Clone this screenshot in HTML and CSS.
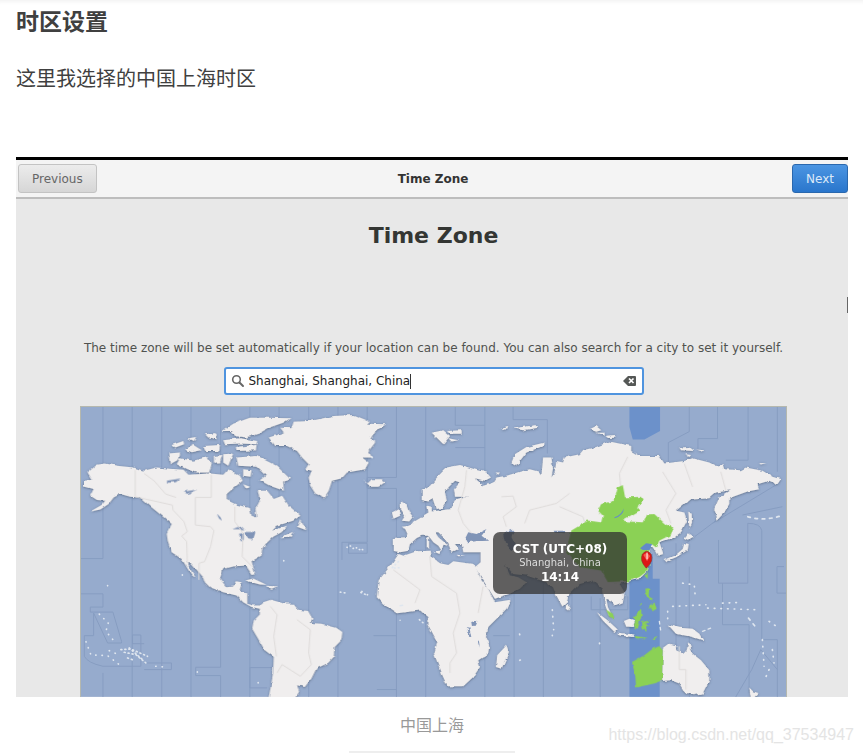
FILE: index.html
```html
<!DOCTYPE html>
<html lang="zh-CN">
<head>
<meta charset="utf-8">
<title>时区设置</title>
<link rel="stylesheet" href="styles.css">
</head>
<body>
<main class="article">
  <h2 class="heading">时区设置</h2>
  <p class="lead">这里我选择的中国上海时区</p>
  <figure class="figure">
    <div class="installer">
      <header class="bar">
        <button class="btn" type="button">Previous</button>
        <strong class="bar-title">Time Zone</strong>
        <button class="btn btn-primary" type="button">Next</button>
      </header>
      <section class="zone">
        <h1 class="zone-title">Time Zone</h1>
        <i class="edge"></i>
        <div class="picker">
          <label class="hint" for="city">The time zone will be set automatically if your location can be found. You can also search for a city to set it yourself.</label>
          <div class="search">
            <svg class="icon" viewBox="0 0 14 14" aria-hidden="true"><circle cx="5.5" cy="5.5" r="3.8" fill="none" stroke="#666" stroke-width="1.6"/><path d="M8.5 8.5 12 12" stroke="#666" stroke-width="2" stroke-linecap="round"/></svg>
            <input class="city" id="city" type="text" value="Shanghai, Shanghai, China"><i class="caret"></i>
            <button class="clear" type="button" aria-label="Clear"><svg class="icon" viewBox="0 0 14 14"><path d="M5 2H12Q13 2 13 3V11Q13 12 12 12H5L0 7Z" fill="#555856"/><path d="M6 4.500 10.500 9M10.500 4.500 6 9" stroke="#fff" stroke-width="1.700"/></svg></button>
          </div>
          <div class="map">
            <svg class="world" viewBox="0 0 2121 872" role="img" aria-label="World time zones">
              <defs>
                <filter id="coast" x="0" y="0" width="2121" height="872" filterUnits="userSpaceOnUse">
                  <feTurbulence type="fractalNoise" baseFrequency=".055" numOctaves="2" seed="4" result="n"/>
                  <feDisplacementMap in="SourceGraphic" in2="n" scale="10" xChannelSelector="R" yChannelSelector="G" result="d"/>
                  <feDropShadow in="d" dx="0" dy="2" stdDeviation="3" flood-color="#4c5870" flood-opacity=".75"/>
                </filter>
                <filter id="rough" x="0" y="0" width="2121" height="872" filterUnits="userSpaceOnUse">
                  <feTurbulence type="fractalNoise" baseFrequency=".055" numOctaves="2" seed="4" result="n"/>
                  <feDisplacementMap in="SourceGraphic" in2="n" scale="10" xChannelSelector="R" yChannelSelector="G"/>
                </filter>
              </defs>
              <rect width="2121" height="872" fill="#96abcd"/>
              <g fill="none" stroke="#879dc1" stroke-width="3">
                <path d="M66 0V456H0M66 800V872M154 0V872M243 0V872M331 0V872M420 0V783H345V808H420V872M508 0V872M596 0V872M685 0V872M773 0V872M861 0V407H785V460M949 0V212H861V245H949V872M1037 0V872M1126 0V55H1215M1126 122H1215M1215 0V122V872M1300 0V38H1403V140M1303 530V872M1391 440V872M1477 560V872M1562 575V872M1830 0V74L1767 107V180M1915 0V95H1856V130M2007 0V160H1940M2095 0V195"/>
                <path d="M0 562H66V602H28V617H96L122 705V710H80L38 620V688H10V750Q20 770 66 780H180V686H155V712H190M190 770H272V790H190M508 845V784H575M508 845H560M805 410H861V440H805ZM1790 410V720M1830 480V872M1918 400V530H2006V350M1930 530V655H2010V860M2006 350Q2045 350 2048 372V700H2095V872M2115 480H2094V560H2121M1645 570V610H1535V570M1820 410 1910 342M1900 350 2090 235M1990 325 2110 300M948 688H880M1290 688H1240M890 850H948M1970 872 2018 790 2045 730 2095 790"/>
              </g>
              <path d="M1650 0H1742V72L1695 98H1660L1650 60ZM1650 520 1720 440V517H1741V872H1650Z" fill="#6c91ca"/>

              <g filter="url(#coast)" fill="#f0eeee">
                <g transform="translate(-12 -18)">
                  <path d="M22 240 45 237 32 215 60 192 85 188 120 195 170 200 200 210 240 200 270 203 320 207 335 222 400 218 440 222 455 205 470 215 490 225 498 240 470 262 450 280 450 298 480 312 520 322 525 345 540 350 537 325 550 300 544 270 572 270 592 295 617 285 637 315 672 345 650 360 602 375 587 390 632 375 615 395 590 408 567 430 556 450 555 465 525 482 535 518 525 520 508 495 470 498 440 505 430 535 450 560 470 558 478 542 495 545 488 575 512 578 512 610 530 615 548 615 560 605 583 598 620 608 650 610 665 628 695 632 708 655 700 668 735 670 780 682 798 695 795 720 775 740 772 770 755 788 720 805 705 835 685 860 662 855 668 875 650 900H575L583 860 590 820 592 770 565 750 545 715 527 685 532 660 550 642 550 625 525 620 500 605 480 585 440 575 400 560 385 545 380 530 340 485 330 485 340 505 358 533 345 523 315 475 285 455 273 420 270 400 285 370 262 350 225 320 190 290 160 288 130 280 110 290 95 310 70 326 40 332 75 312 85 300 60 298 40 285 50 265 22 257Z"/>
                  <path d="M275 158 310 155 307 175 280 190ZM310 172 350 180 392 168 405 190 397 215 360 215 330 205 300 190ZM285 132 320 120 322 130 296 140ZM335 112 358 108 352 120ZM325 145 350 132 375 148 345 154ZM385 100 420 96 420 115 395 110ZM380 135 430 132 428 150 388 150ZM412 165 437 162 430 185 412 185ZM440 160 470 158 455 195 440 185ZM438 90 470 68 520 50 570 50 642 52 620 65 577 80 547 98 510 110 480 106 465 90ZM440 118 490 112 542 120 540 130 490 128 445 130ZM478 138 540 132 538 148 480 150ZM480 170 540 165 600 195 642 235 620 242 622 270 580 255 550 238 568 225 540 198 485 195ZM500 205 525 208 522 228 500 225ZM500 250 520 258 510 266Z"/>
                  <path d="M577 110 622 95 612 80 645 82 652 62 702 60 772 45 832 42 877 60 870 68 930 70 897 90 882 115 897 125 877 150 887 170 857 170 877 185 867 205 812 215 797 232 767 240 757 270 744 290 717 278 702 255 697 230 707 210 687 205 697 190 677 170 662 150 632 135 597 135ZM862 235 875 247 887 235 917 235 925 245 907 258 882 258ZM662 378 672 355 677 372 692 380 688 388ZM612 410 650 393 640 408ZM506 540 530 534 570 553 550 552ZM570 556 602 558 585 565Z"/>
                </g>
                <g transform="translate(900 -18)">
                  <path d="M38 412 75 410 82 400 75 385 65 378 90 375 100 362 120 350 145 335 142 315 155 318 155 332 215 325 220 300 265 288 225 288 222 265 240 245 225 240 205 260 195 275 200 300 185 322 170 325 160 295 145 302 125 298 125 270 150 255 175 225 200 200 240 192 285 205 320 215 333 230 315 240 285 232 310 255 340 245 350 230 380 225 420 213 450 205 475 212 485 225 490 170 515 170 520 205 515 230 525 215 530 180 550 185 555 170 600 160 610 148 650 138 690 122 755 135 755 150 780 165 840 165 855 188 915 180 940 172 990 185 1010 195 1030 190 1035 205 1085 208 1100 200 1150 210 1180 228 1205 235 1195 250 1170 240 1135 250 1140 265 1105 272 1070 285 1050 292 1050 310 1035 335 1015 357 1005 325 1020 290 1055 268 1010 275 990 292 930 297 890 330 915 335 923 360 905 395 885 410 840 425 852 460 835 465 820 440 805 435 790 445 812 450 805 465 812 480 805 510 780 535 750 542 720 550 735 575 730 605 705 615 695 600 680 595 685 620 700 650 688 645 675 610 670 565 640 540 600 550 565 585 562 605 548 618 530 585 520 560 500 545 440 525 400 520 375 490 390 525 415 530 440 545 420 565 390 580 345 595 310 540 285 500 302 485 302 455 250 455 245 430 225 430 235 445 215 455 205 430 190 410 175 395 165 395 175 410 205 435 190 432 185 450 175 435 160 425 145 405 125 405 110 412 90 430 85 450 60 455 38 450Z"/>
                  <path d="M62 302 78 310 85 330 100 350 90 362 65 360 75 345 62 325ZM35 335 55 325 60 345 40 354ZM155 95 190 88 210 105 190 130 175 115ZM200 90 245 88 245 98 215 98ZM205 112 235 118 215 122ZM395 185 405 160 440 138 495 125 490 135 440 155 420 180 415 195ZM360 83 385 78 382 86ZM400 82 470 72 475 80 430 88ZM630 85 650 75 665 88 650 92ZM650 95 675 95 675 104ZM678 105 705 102 708 110 685 111ZM900 140 930 138 945 150 905 148ZM950 146 975 148 970 152ZM918 160 935 162 930 168ZM1140 187 1162 186 1145 191ZM347 215 360 215 355 222ZM927 333 937 335 938 365 930 385ZM928 398 945 408 925 420 915 415ZM915 428 925 430 922 450 890 470 870 478 860 475 890 462 910 445ZM856 478 866 475 862 485ZM560 612 572 620 565 630 558 625ZM140 415 147 405 147 440 140 440ZM160 452 183 450 178 460ZM230 462 255 465 235 467Z"/>
                  <path d="M55 460 70 465 110 452 152 450 155 470 180 488 205 493 220 482 280 490 285 495 305 540 325 565 345 605 392 598 380 625 350 655 325 680 318 710 328 735 325 760 295 780 300 800 280 830 250 858 202 858 185 820 162 760 172 725 145 675 145 650 120 630 50 638 15 615-10 590-5 540 35 490ZM380 735 387 755 365 805 348 800 352 765Z"/>
                </g>
                <g transform="translate(1200 342)">
                  <path d="M550 385 570 370 595 375 590 390 612 400 622 390 628 365 640 400 665 420 690 450 690 480 670 520 640 525 615 515 600 490 575 480 548 482ZM565 312 600 322 640 325 660 340 672 360 640 350 590 340ZM352 275 385 300 412 325 405 335 370 300ZM415 337 465 342 460 350 420 345ZM433 302 450 295 468 300 460 320 440 318ZM810 502 822 514 838 518 825 532H815Z"/>
                </g>
              </g>

              <g filter="url(#rough)" fill="#8094b7">
                <g transform="translate(900 -18)">
                  <path d="M255 415 265 395 290 400 320 385 305 405 325 420 290 422 260 425ZM370 400 395 385 405 395 395 410 410 440 395 450 375 425ZM525 390 560 390 555 398 528 396Z"/>
                  <path d="M274 665 292 660 290 675 276 677ZM262 680 268 710 274 710 268 680ZM293 720 300 742 297 722Z"/>
                </g>
                <path d="M258 222 300 215 285 226 260 228ZM308 255 350 248 320 262ZM408 320 420 332 424 342 415 335ZM455 368 480 358 492 368ZM475 382 480 400 490 400 490 378ZM492 376 525 376 518 398 500 395Z"/>
              </g>

              <g fill="none" stroke="#dedbda" stroke-width="3">
                <path d="M163 190V270L275 295 277 310 310 345 320 375 303 388 318 405 320 470M190 200 220 222 255 262 286 272M392 205V272H344V355L390 360 400 372 390 420 372 465 355 470V520M463 300V345L488 380 485 450 515 480M570 600 590 625 580 690 588 750M650 640 690 670 685 740 693 775 660 810 605 775 590 800"/>
                <path d="M1160 190 1155 240 1135 310 1150 350 1175 380M1265 270 1300 268 1310 300 1270 330 1280 360M1470 260 1430 290 1350 310 1335 350M1645 150 1620 200 1625 255M1750 195 1790 260 1760 310 1775 350M1815 170 1840 240M1925 195 1940 250M940 490 1020 550 1005 590M1050 450 1055 510 1130 560 1140 620 1120 680 1130 740 1110 770V800M1210 540 1195 620M1440 300 1510 330 1520 360M1800 720V790H1820V850"/>
              </g>

              <g filter="url(#rough)" fill="#8bd154">
                <path transform="translate(1440 -18)" d="M175 260 190 253 197 290 245 288 250 298 232 320 240 330 190 358 200 362 250 365 260 342 285 340 320 372 342 380 330 405 300 420 290 440 275 430 250 440 270 450 265 465 272 480 265 510 240 530 210 542 145 545 125 510 60 500 20 450 30 410 35 390 85 360 125 365 130 345 115 330 125 310 165 300Z"/>
                <path transform="translate(1200 342)" d="M458 425 495 405 520 385 540 378 550 390 548 482 525 490 470 502 468 470ZM380 268 400 280 405 295 390 290ZM460 292 485 265 487 285 475 325 462 322 468 300ZM498 205 510 203 508 225 520 232 518 240 500 225ZM508 260 525 245 532 265 520 272ZM490 248 480 258 485 248ZM488 305 510 300 498 310 512 320 500 320 502 335 490 325ZM495 165 505 155 505 175ZM465 347 505 352 470 354ZM515 355 535 347 525 358Z"/>
              </g>
              <path d="M1605 332Q1625 325 1633 305 1633 325 1605 335ZM1682 425 1700 410 1718 412 1710 430H1690Z" fill="#638bc9"/>

              <g fill="none" stroke="#dfe6ef" stroke-linecap="round" stroke-width="5">
                <path stroke-dasharray="1 18" d="M55 623 82 650 75 675 96 700M15 706 30 746 80 748 115 775M85 733 115 746M225 780 262 783M80 538V536M610 463V462M810 418 850 430M875 152 885 154M305 506V504M800 422 845 430M845 555 862 565M350 798V797M533 830V828"/>
                <path stroke-dasharray="3 9" d="M120 730 150 728 200 750M130 738 165 745 195 770M145 725 185 760M140 755 160 762"/>
                <path stroke-dasharray="2 18" d="M1418 610 1422 670M1320 685 1316 670M1810 530 1845 535 1848 570M1765 615V640M1780 600 1880 595M1885 605 2030 610M1930 590 1980 588M2070 645 2100 665M2050 700 2055 780M2080 730 2085 770M2070 790 2055 825M1320 762 1334 756M1418 688V687M1560 712V710"/>
                <path stroke-dasharray="8 14" d="M2006 330Q2055 345 2110 326M2008 635 2028 660"/>
                <path stroke-width="4" stroke-dasharray="8 10" d="M1870 675 1895 665M1740 645 1745 680M960 598 975 595M960 642V641"/>
                <path stroke-dasharray="2 10" d="M955 465 935 485 965 483M780 557 800 560M842 558 858 565M1018 640 1030 650"/>
              </g>
              <g><path d="M1700 484Q1680 462 1689 443 1702 425 1715 443 1724 462 1702 484Z" fill="#dc1715" stroke="#8d302a" stroke-width="2"/><path d="M1692 445Q1702 434 1712 448L1703 464Z" fill="#f75a51"/><path d="M1703 438V458" stroke="#fff" stroke-width="3"/></g>
            </svg>
            <div class="tooltip"><strong class="tip-zone">CST (UTC+08)</strong><span class="tip-city">Shanghai, China</span><strong class="tip-time">14:14</strong></div>
          </div>
        </div>
      </section>
    </div>
    <figcaption class="caption">中国上海</figcaption>
  </figure>
  <span class="watermark">https://blog.csdn.net/qq_37534947</span>
</main>
</body>
</html>
```

FILE: styles.css
```css
* { box-sizing: border-box; }
body {
  margin: 0;
  background: #fff;
  color: #404040;
  font-family: "Liberation Sans", "Noto Sans CJK SC", sans-serif;
}
.article {
  position: relative;
  padding: 5px 15px 0 16px;
  box-shadow: inset 0 6px 5px -5px #eee;
}
.heading {
  margin: 0 0 24px;
  font-size: 23px;
  line-height: 34px;
}
.lead {
  margin: 0;
  font-size: 20px;
  line-height: 32px;
}
.figure { margin: 62px 0 0; }
.installer {
  overflow: hidden;
  border-top: 3px solid #000;
  background: #e8e8e8;
  color: #50524f;
  font: 12px/16px "DejaVu Sans", sans-serif;
}
.bar {
  display: grid;
  grid-template-columns: 1fr auto 1fr;
  align-items: center;
  height: 39px;
  padding-left: 2px;
  border-bottom: 2px solid #bdbdbd;
  background: #f4f4f4;
}
.btn {
  justify-self: start;
  height: 29px;
  padding: 0 13px;
  border: 1px solid #c3c3c3;
  border-radius: 3px;
  background: linear-gradient(#ececec, #d6d6d6);
  color: #666;
  font: inherit;
}
.btn-primary {
  justify-self: end;
  border-color: #2a68ae;
  background: linear-gradient(#4b95e2, #2a76cc);
  color: #dce9f8;
}
.bar-title { color: #333; }
.zone {
  position: relative;
  padding: 22px 61px 0 64px;
}
.zone-title {
  margin: 0 0 89px;
  color: #343633;
  font-size: 22px;
  line-height: 30px;
  text-align: center;
}
.edge {
  position: absolute;
  top: 98px;
  right: 0;
  width: 1px;
  height: 16px;
  background: #666;
}
.picker {
  display: flex;
  flex-direction: column;
  align-items: center;
}
.hint { text-align: center; }
.search {
  display: flex;
  align-items: center;
  width: 420px;
  max-width: 100%;
  height: 28px;
  margin: 11px 0;
  padding: 0 5px;
  border: 2px solid #4f94df;
  border-radius: 3px;
  background: #fff;
}
.icon {
  display: block;
  width: 14px;
  height: 14px;
}
.city {
  field-sizing: content;
  margin-left: 4px;
  padding: 0;
  border: 0;
  outline: 0;
  background: none;
  color: #222;
  font: inherit;
}
.caret {
  width: 1px;
  height: 15px;
  background: #333;
}
.clear {
  margin-left: auto;
  padding: 0;
  border: 0;
  background: none;
}
.map {
  position: relative;
  width: 100%;
  border: 1px solid #b5b8ae;
  border-bottom: 0;
}
.world {
  display: block;
  width: 100%;
}
.tooltip {
  position: absolute;
  top: 43%;
  right: 159px;
  display: flex;
  flex-direction: column;
  align-items: center;
  width: 134px;
  padding: 10px 0;
  border-radius: 7px;
  background: rgba(50, 50, 50, .76);
  color: #fff;
  line-height: 14px;
}
.tip-city {
  color: #ddd;
  font-size: 10px;
}
.caption {
  width: 166px;
  margin: 13px auto 0;
  padding-bottom: 9px;
  border-bottom: 2px solid #eee;
  color: #999;
  font-size: 16px;
  line-height: 32px;
  text-align: center;
}
.watermark {
  position: absolute;
  right: 9px;
  bottom: 8px;
  color: #e4e4e4;
  font-size: 16px;
  line-height: 20px;
}
```
